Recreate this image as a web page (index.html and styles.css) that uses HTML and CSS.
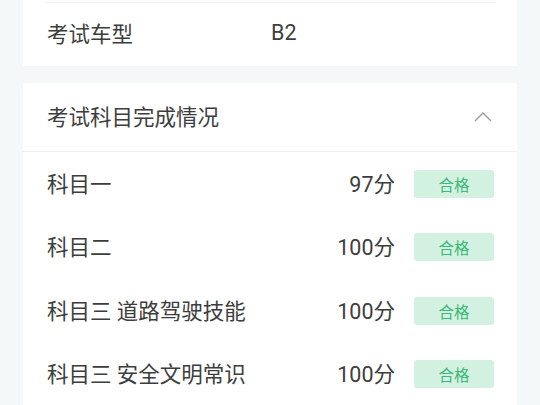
FILE: index.html
```html
<!DOCTYPE html>
<html lang="zh-CN">
<head>
<meta charset="utf-8">
<link rel="stylesheet" href="styles.css">
</head>
<body>
<div class="page">
  <section class="card card-top">
    <div class="info-row">
      <span class="info-label">考试车型</span>
      <span class="info-value">B2</span>
    </div>
  </section>
  <section class="card card-exams">
    <div class="exam-header">
      <span class="exam-title">考试科目完成情况</span>
      <svg class="chevron" width="18" height="11" viewBox="0 0 18 11">
        <polyline points="1,10 9,2 17,10" fill="none" stroke="#9a9a9a" stroke-width="1.4"/>
      </svg>
    </div>
    <div class="exam-row">
      <span class="exam-name">科目一</span>
      <span class="exam-score">97分</span>
      <span class="badge">合格</span>
    </div>
    <div class="exam-row">
      <span class="exam-name">科目二</span>
      <span class="exam-score">100分</span>
      <span class="badge">合格</span>
    </div>
    <div class="exam-row">
      <span class="exam-name">科目三 道路驾驶技能</span>
      <span class="exam-score">100分</span>
      <span class="badge">合格</span>
    </div>
    <div class="exam-row">
      <span class="exam-name">科目三 安全文明常识</span>
      <span class="exam-score">100分</span>
      <span class="badge">合格</span>
    </div>
  </section>
</div>
</body>
</html>
```
FILE: styles.css
```css
html, body {
  margin: 0;
  padding: 0;
}
body {
  background: #f5f8f8;
  font-family: Roboto, "Noto Sans CJK SC", sans-serif;
  color: #3d3d3d;
  width: 540px;
  height: 405px;
  overflow: hidden;
}
.page {
  display: flex;
  flex-direction: column;
  gap: 17px;
  padding: 0 23px;
}
.card {
  background: #ffffff;
}
.card-top {
  padding-top: 2px;
}
.info-row {
  display: flex;
  align-items: center;
  height: 64px;
  margin: 0 22px 0 22px;
  padding: 0 0 4px 2px;
  border-top: 1px solid #f1f3f3;
  box-sizing: border-box;
  font-size: 21.5px;
}
.info-label {
  width: 224px;
}
.exam-header {
  display: flex;
  align-items: center;
  justify-content: space-between;
  height: 69px;
  padding: 0 25px 3px 24px;
  border-bottom: 1px solid #eef0f0;
  box-sizing: border-box;
  font-size: 21.5px;
}
.chevron {
  display: block;
  margin-top: 1px;
}
.exam-row {
  display: flex;
  align-items: center;
  height: 63.5px;
  padding: 0 23px 3px 24px;
  box-sizing: border-box;
  font-size: 21.5px;
}
.exam-name {
  flex: 1;
}
.exam-score {
  margin-right: 19px;
}
.badge {
  width: 80px;
  height: 28px;
  border-radius: 3px;
  background: #d3f1e1;
  color: #3cb878;
  font-size: 15.5px;
  display: flex;
  align-items: center;
  justify-content: center;
  margin-top: 3px;
}
```
